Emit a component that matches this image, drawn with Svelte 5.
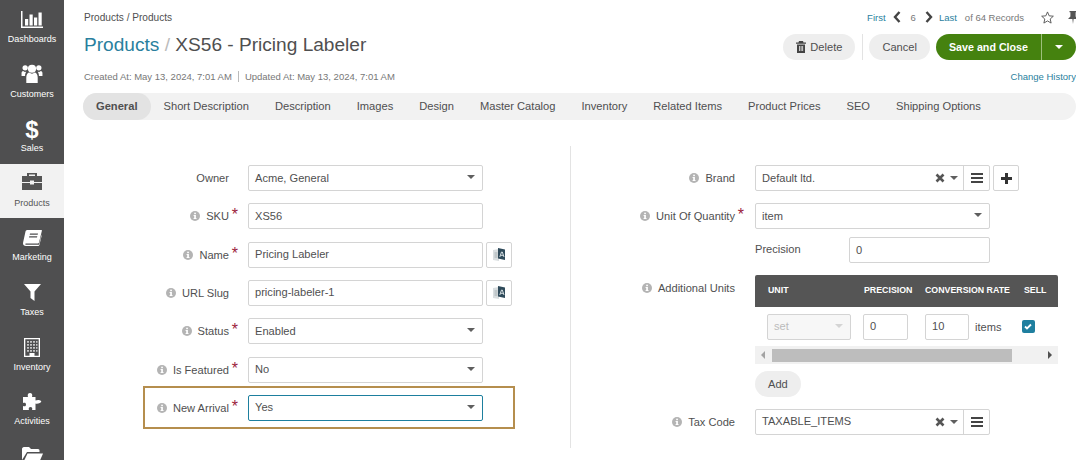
<script>
  const nav = [
    { label: 'Dashboards', icon: 'chart' },
    { label: 'Customers', icon: 'users' },
    { label: 'Sales', icon: 'dollar' },
    { label: 'Products', icon: 'case', active: true },
    { label: 'Marketing', icon: 'book' },
    { label: 'Taxes', icon: 'filter' },
    { label: 'Inventory', icon: 'building' },
    { label: 'Activities', icon: 'puzzle' },
    { label: '', icon: 'folder' }
  ];
  const tabs = ['General', 'Short Description', 'Description', 'Images', 'Design', 'Master Catalog', 'Inventory', 'Related Items', 'Product Prices', 'SEO', 'Shipping Options'];
  const fields = [
    { label: 'Owner', value: 'Acme, General', type: 'select' },
    { label: 'SKU', value: 'XS56', info: true, req: true },
    { label: 'Name', value: 'Pricing Labeler', info: true, req: true, lang: true },
    { label: 'URL Slug', value: 'pricing-labeler-1', info: true, lang: true },
    { label: 'Status', value: 'Enabled', type: 'select', info: true, req: true },
    { label: 'Is Featured', value: 'No', type: 'select', info: true, req: true },
    { label: 'New Arrival', value: 'Yes', type: 'select', info: true, req: true, hot: true }
  ];
</script>

{#snippet info()}
  <svg class="info" viewBox="0 0 10 10" width="10" height="10">
    <circle cx="5" cy="5" r="5" fill="#b4b4b4" />
    <rect x="4.200" y="1.700" width="1.700" height="1.500" fill="#fff" />
    <path d="M3.600 4h2.300v3.100h.6V8H3.600v-.9h.6V4.900h-.6z" fill="#fff" />
  </svg>
{/snippet}

{#snippet caret()}
  <span class="caret"></span>
{/snippet}

{#snippet cross()}
  <svg class="cross" viewBox="0 0 10 10" width="10" height="10">
    <path d="M1.500 1.500l7 7M8.500 1.500l-7 7" stroke="#555" stroke-width="2.600" />
  </svg>
{/snippet}

{#snippet bars()}
  <svg viewBox="0 0 12 10" width="12" height="10">
    <path d="M0 0h12v2H0zM0 4h12v2H0zM0 8h12v2H0z" fill="#444" />
  </svg>
{/snippet}

{#snippet langBtn()}
  <button class="side-btn" aria-label="Translate">
    <svg viewBox="0 0 13 15" width="13" height="15">
      <path d="M0 3l6-1v12l-6-1z" fill="#d9dee0" />
      <path d="M1.500 6h3M1.500 8h3M1.500 10h3" stroke="#9aa4a8" stroke-width=".8" />
      <path d="M5 1l7 1.500V13l-7-1.500z" fill="#2f4a5a" />
      <path d="M6.800 10l1.700-5h.8l1.700 5M7.700 8.300h2.400" fill="none" stroke="#e8eef0" stroke-width=".9" />
    </svg>
  </button>
{/snippet}

{#snippet navIcon(name)}
  {#if name === 'chart'}
    <svg viewBox="0 0 22 17" width="22" height="17">
      <path d="M0 0h1.500v15.500H22V17H0z" fill="#fff" />
      <path d="M4 8h3.200v6.500H4zM8.500 3.500h3.200v11H8.500zM13 6.500h3.200v8H13zM17.500 1.500h3.200v13h-3.200z" fill="#fff" />
    </svg>
  {:else if name === 'users'}
    <svg viewBox="0 0 22 20" width="22" height="19">
      <circle cx="11" cy="5" r="4.300" fill="#fff" />
      <circle cx="3.800" cy="4" r="2.800" fill="#fff" />
      <circle cx="18.200" cy="4" r="2.800" fill="#fff" />
      <path d="M5 20v-6c0-3 1.800-5 3.200-5 .9.800 1.800 1.200 2.800 1.200s1.900-.4 2.800-1.200c1.400 0 3.200 2 3.200 5v6z" fill="#fff" />
      <path d="M0 12.500V9.500C0 8 1 7.300 1.800 7.300c.6.600 1.300 1 2 1 .4 0 .8 0 1.200-.1C4.300 9.200 3.700 10.500 3.700 12.500zM22 12.500V9.500c0-1.500-1-2.200-1.800-2.200-.6.600-1.300 1-2 1-.4 0-.8 0-1.200-.1.700 1 1.300 2.300 1.300 4.300z" fill="#fff" />
    </svg>
  {:else if name === 'dollar'}
    <span class="dollar">$</span>
  {:else if name === 'case'}
    <svg class="case" viewBox="0 0 20 17" width="20" height="17">
      <path d="M7 3V1.500h6V3h2V0H5v3zM0 3h20v6H12V7.500H8V9H0zM0 10h8v1.500h4V10h8v7H0z" fill="#555" />
    </svg>
  {:else if name === 'book'}
    <svg viewBox="0 0 19 16" width="19" height="16">
      <path d="M4.500 0H18.500c.4 0 .5.300.4.700L16 12.500c-.2.600-.6.900-1.200.9H3.500c-1 0-1.300.4-1.300.6 0 .3.400.7 1.300.7H16l2.600-10.500v1.800L16.400 15c-.2.600-.6 1-1.200 1H3c-1.800 0-3-1-3-2.500 0-.5.100-1 .2-1.400L2.500 1.500C2.800.5 3.500 0 4.500 0z" fill="#fff" />
      <path d="M7 3.500h8l-.3 1.300h-8zM6.300 6.300h8L14 7.600H6z" fill="#4f4f50" />
    </svg>
  {:else if name === 'filter'}
    <svg viewBox="0 0 17 17" width="17" height="17">
      <path d="M0 0h17L10.500 7.500V17L6.500 14V7.500z" fill="#fff" />
    </svg>
  {:else if name === 'building'}
    <svg class="building" viewBox="0 0 16 19" width="16" height="19">
      <path fill-rule="evenodd" d="M0 0h16v19H0zM1.300 1.300v16.400h4.200V15h5v2.700h4.200V1.300z" fill="#fff" />
      <path d="M3 3h2v1.800H3zM6 3h2v1.800H6zM9 3h2v1.800H9zM12 3h1.500v1.800H12zM3 6h2v1.800H3zM6 6h2v1.800H6zM9 6h2v1.800H9zM12 6h1.500v1.800H12zM3 9h2v1.800H3zM6 9h2v1.800H6zM9 9h2v1.800H9zM12 9h1.500v1.800H12zM3 12h2v1.800H3zM6 12h2v1.800H6zM9 12h2v1.800H9zM12 12h1.500v1.800H12z" fill="#c4c4c4" />
    </svg>
  {:else if name === 'puzzle'}
    <svg viewBox="0 0 19 17" width="19" height="17">
      <path d="M0 4h5C4.500 2.500 4.500 0 7 0s2.500 2.500 2 4h3.500v3.500c1.500-.7 4-1 5.500.5s-3.500 3.500-5.500 2.500V17H9c.5-1.500.3-3-1.500-3s-2 1.500-1.500 3H0v-4c1.500.5 3 .5 3-1.500S1.500 9.500 0 10z" fill="#fff" />
    </svg>
  {:else if name === 'folder'}
    <svg viewBox="0 0 21 18" width="21" height="18">
      <path d="M0 2c0-1 .8-2 2-2h5l2 2h7c1 0 1.500.8 1.500 1.800V5H5L0 13z" fill="#fff" />
      <path d="M5.500 6.500H21L16 18H0z" fill="#fff" />
    </svg>
  {/if}
{/snippet}

<div class="page">
  <nav class="sidebar">
    {#each nav as item}
      <div class="nav-item" class:active={item.active}>
        <div class="nav-icon">{@render navIcon(item.icon)}</div>
        <div class="nav-label">{item.label}</div>
      </div>
    {/each}
  </nav>

  <main class="main">
    <header class="head">
      <div class="head-top">
        <div class="crumbs">Products / Products</div>
        <div class="pager">
          <a href="#first">First</a>
          <svg class="prev" viewBox="0 0 8 12" width="8" height="12"><path d="M6.500 1L2 6l4.500 5" fill="none" stroke="#444" stroke-width="2.400" /></svg>
          <span class="num">6</span>
          <svg class="next" viewBox="0 0 8 12" width="8" height="12"><path d="M1.500 1L6 6l-4.500 5" fill="none" stroke="#444" stroke-width="2.400" /></svg>
          <a class="last" href="#last">Last</a>
          <span class="of">of 64 Records</span>
          <svg class="star" viewBox="0 0 14 14" width="13" height="13"><path d="M7 1l1.800 4.200 4.500.4-3.400 3 1 4.400L7 10.700 3.100 13l1-4.400-3.400-3 4.500-.4z" fill="none" stroke="#555" stroke-width="1" /></svg>
          <svg class="pin" viewBox="0 0 10 13" width="10" height="13"><path d="M1.500 0h7v1.200H7.600V5.500L10 8H5.600L5 13l-.6-5H0l2.400-2.500V1.200h-.9z" fill="#555" /></svg>
        </div>
      </div>
      <div class="head-main">
        <h1><a href="#products">Products</a> <span class="slash">/</span> XS56 - Pricing Labeler</h1>
        <div class="actions">
          <button class="btn">
            <svg viewBox="0 0 10 12" width="10" height="12"><path fill-rule="evenodd" d="M3 0h4l.5 1.500H10v1.200H0V1.500h2.500zM1 3.500h8V12H1zM3 5v5h.8V5zm1.700 0v5h.8V5zm1.600 0v5h.8V5z" fill="#444" /></svg>
            Delete
          </button>
          <span class="sep"></span>
          <button class="btn cancel">Cancel</button>
          <div class="save">
            <button class="save-main">Save and Close</button>
            <button class="save-caret" aria-label="More"><span class="caret white"></span></button>
          </div>
        </div>
      </div>
      <div class="head-meta">
        <div class="meta"><span>Created At: May 13, 2024, 7:01 AM</span><i></i><span>Updated At: May 13, 2024, 7:01 AM</span></div>
        <a class="history" href="#history">Change History</a>
      </div>
    </header>

    <div class="tabs">
      {#each tabs as tab, i}
        <span class="tab" class:on={i === 0}>{tab}</span>
      {/each}
    </div>

    <div class="form">
      <section class="col left">
        {#each fields as f}
          <div class="row" class:hot={f.hot}>
            <div class="label">
              {#if f.info}{@render info()}{/if}
              <span>{f.label}</span>
              {#if f.req}<span class="req">*</span>{/if}
            </div>
            <div class="ctrl" class:focus={f.hot}>
              <span>{f.value}</span>
              {#if f.type === 'select'}{@render caret()}{/if}
            </div>
            {#if f.lang}{@render langBtn()}{/if}
          </div>
        {/each}
      </section>

      <section class="col right">
        <div class="row">
          <div class="label">{@render info()}<span>Brand</span></div>
          <div class="ctrl combo">
            <span class="grow">Default ltd.</span>
            {@render cross()}
            {@render caret()}
            <span class="combo-btn">{@render bars()}</span>
          </div>
          <button class="side-btn plus" aria-label="Add brand">
            <svg viewBox="0 0 11 11" width="11" height="11"><path d="M4 0h3v4h4v3H7v4H4V7H0V4h4z" fill="#333" /></svg>
          </button>
        </div>
        <div class="row tight">
          <div class="label">{@render info()}<span>Unit Of Quantity</span><span class="req">*</span></div>
          <div class="ctrl"><span>item</span>{@render caret()}</div>
        </div>
        <div class="precision">
          <span class="precision-label">Precision</span>
          <div class="ctrl small"><span>0</span></div>
        </div>
        <div class="units">
          <div class="label units-label">{@render info()}<span>Additional Units</span></div>
          <div class="units-box">
            <div class="thead">
              <span class="th-unit">UNIT</span>
              <span class="th-prec">PRECISION</span>
              <span class="th-rate">CONVERSION RATE</span>
              <span>SELL</span>
            </div>
            <div class="tbody">
              <div class="ctrl disabled"><span>set</span><span class="caret pale"></span></div>
              <div class="ctrl num-a"><span>0</span></div>
              <div class="ctrl num-b"><span>10</span></div>
              <span class="items">items</span>
              <span class="check">
                <svg viewBox="0 0 8 7" width="8" height="7"><path d="M1 3.500l2 2 4-4" fill="none" stroke="#fff" stroke-width="1.800" /></svg>
              </span>
            </div>
            <div class="scroll">
              <span class="arrow back"></span>
              <span class="thumb"></span>
              <span class="arrow fwd"></span>
            </div>
            <button class="btn add">Add</button>
          </div>
        </div>
        <div class="row">
          <div class="label">{@render info()}<span>Tax Code</span></div>
          <div class="ctrl combo">
            <span class="grow">TAXABLE_ITEMS</span>
            {@render cross()}
            {@render caret()}
            <span class="combo-btn">{@render bars()}</span>
          </div>
        </div>
      </section>
    </div>
  </main>
</div>

<style>
  :global(body) {
    margin: 0;
    background: #fff;
    overflow: hidden;
  }
  .page {
    display: flex;
    height: 460px;
    overflow: hidden;
    font-family: "Liberation Sans", Arial, sans-serif;
    font-size: 11.1px;
    color: #4f4f50;
  }
  a {
    color: #2a7f9e;
    text-decoration: none;
  }
  button {
    font: inherit;
    color: inherit;
    cursor: pointer;
  }

  .sidebar {
    flex: 0 0 64px;
    background: #4f4f50;
    overflow: hidden;
  }
  .nav-item {
    height: 54.6px;
    color: #fff;
    text-align: center;
    font-size: 9px;
    line-height: 12px;
  }
  .nav-item.active {
    background: #f2f2f2;
    color: #555;
  }
  .nav-icon {
    height: 28px;
    display: flex;
    align-items: flex-end;
    justify-content: center;
  }
  .nav-label {
    margin-top: 5px;
  }
  .dollar {
    font-size: 24px;
    line-height: 24px;
    font-weight: 700;
    margin-bottom: -5px;
  }
  .case {
    margin-bottom: 2px;
  }
  .building {
    margin-bottom: -1px;
  }

  .main {
    flex: 1;
    min-width: 0;
    padding: 0 0 0 19px;
    overflow: hidden;
  }
  .head-top {
    display: flex;
    justify-content: space-between;
    align-items: center;
    height: 34px;
    font-size: 10.100px;
  }
  .crumbs {
    padding-left: 1px;
  }
  .pager {
    display: flex;
    align-items: center;
    color: #777;
    font-size: 9.500px;
    margin-right: -2px;
  }
  .prev {
    margin-left: 7px;
  }
  .num {
    margin: 0 9px 0 10px;
  }
  .last {
    margin-left: 6px;
  }
  .of {
    margin-left: 8px;
  }
  .star {
    margin-left: 17px;
  }
  .pin {
    margin-left: 14px;
  }
  .head-main {
    display: flex;
    justify-content: space-between;
    align-items: center;
    height: 26px;
  }
  h1 {
    margin: -4px 0 0;
    padding-left: 1px;
    font-size: 19.100px;
    font-weight: 400;
    color: #4f4f50;
  }
  .slash {
    color: #bbb;
  }
  .actions {
    display: flex;
    align-items: center;
    gap: 7px;
  }
  .btn {
    display: inline-flex;
    align-items: center;
    gap: 4px;
    height: 26px;
    padding: 0 13px;
    border: 0;
    border-radius: 13px;
    background: #eee;
    font-size: 11.100px;
  }
  .cancel {
    margin-left: -1px;
  }
  .sep {
    width: 1px;
    height: 26px;
    background: #e3e3e3;
  }
  .save {
    display: flex;
    height: 26px;
    margin-left: -1px;
    border-radius: 13px;
    overflow: hidden;
    background: #45820f;
  }
  .save-main {
    border: 0;
    background: none;
    color: #fff;
    font-weight: 700;
    padding: 0 13px;
    font-size: 10.700px;
    border-right: 1px solid #9dbf7c;
  }
  .save-caret {
    width: 34px;
    border: 0;
    background: none;
    display: flex;
    align-items: center;
    justify-content: center;
  }
  .head-meta {
    display: flex;
    justify-content: space-between;
    align-items: center;
    height: 33px;
    font-size: 9.500px;
    color: #777;
  }
  .meta {
    display: flex;
    align-items: center;
    padding-left: 1px;
  }
  .meta i {
    width: 1px;
    height: 11px;
    background: #bbb;
    margin: 0 6px;
  }
  .tabs {
    display: flex;
    align-items: center;
    height: 27px;
    background: #f2f2f2;
    border-radius: 13.500px;
    font-size: 11.150px;
  }
  .tab {
    height: 27px;
    line-height: 27px;
    padding: 0 13px;
    border-radius: 13.500px;
  }
  .tab.on {
    background: #e3e3e3;
    font-weight: 700;
  }

  .form {
    display: flex;
    padding-top: 26px;
  }
  .left {
    box-sizing: border-box;
    width: 488px;
    height: 302px;
    padding-top: 19px;
    border-right: 1px solid #e3e3e3;
  }
  .right {
    flex: 1;
    padding-top: 19px;
  }
  .row {
    display: flex;
    align-items: center;
    height: 26px;
    margin-bottom: 12.330px;
    position: relative;
  }
  .label {
    display: flex;
    align-items: center;
    justify-content: flex-end;
    flex: 0 0 146px;
    margin-right: 19px;
    position: relative;
  }
  .right .label {
    flex: 0 0 164px;
    margin-right: 20px;
  }
  .info {
    margin-right: 6px;
  }
  .req {
    position: absolute;
    right: -9px;
    top: -3px;
    color: #9c1d3c;
    font-size: 16px;
    line-height: 16px;
  }
  .ctrl {
    display: flex;
    align-items: center;
    box-sizing: border-box;
    width: 235px;
    height: 26px;
    padding: 0 6px 1px;
    border: 1px solid #d4d4d4;
    border-radius: 2px;
    position: relative;
    background: #fff;
  }
  .ctrl > .caret:last-child {
    position: absolute;
    right: 7px;
    top: 9px;
  }
  .ctrl.focus {
    border-color: #1d7f9e;
  }
  .caret {
    display: inline-block;
    width: 0;
    height: 0;
    border-left: 4px solid transparent;
    border-right: 4px solid transparent;
    border-top: 4px solid #5f5f5f;
  }
  .caret.white {
    border-top-color: #fff;
  }
  .caret.pale {
    border-top-color: #d4d4d4;
  }
  .side-btn {
    display: flex;
    align-items: center;
    justify-content: center;
    width: 26px;
    height: 26px;
    margin-left: 3px;
    padding: 0;
    border: 1px solid #d4d4d4;
    border-radius: 2px;
    background: #fff;
  }
  .row.hot::before {
    content: '';
    position: absolute;
    left: 60px;
    top: -9px;
    width: 372px;
    height: 43px;
    box-sizing: border-box;
    border: 2px solid #b58e4e;
  }
  .combo {
    padding-right: 0;
    padding-bottom: 0;
  }
  .grow {
    flex: 1;
    padding-bottom: 1px;
  }
  .cross {
    margin-right: 5px;
  }
  .combo .caret {
    margin-right: 5px;
  }
  .combo-btn {
    flex: 0 0 25px;
    align-self: stretch;
    display: flex;
    align-items: center;
    justify-content: center;
    border-left: 1px solid #d4d4d4;
  }
  .right .row.tight {
    margin-bottom: 8px;
  }
  .precision {
    display: flex;
    align-items: center;
    justify-content: space-between;
    width: 235px;
    margin-left: 184px;
    margin-bottom: 12px;
  }
  .precision-label {
    margin-top: -2px;
  }
  .ctrl.small {
    width: 141px;
  }
  .units {
    display: flex;
    align-items: flex-start;
    margin-bottom: 11.600px;
  }
  .units-label {
    padding-top: 7px;
  }
  .units-box {
    width: 303px;
  }
  .thead {
    display: flex;
    align-items: center;
    box-sizing: border-box;
    height: 32px;
    padding: 0 0 3px 13px;
    background: #555;
    color: #fff;
    font-size: 8.800px;
    font-weight: 700;
    border-radius: 2px 2px 0 0;
  }
  .th-unit { width: 96px; }
  .th-prec { width: 61px; }
  .th-rate { width: 99px; }
  .tbody {
    display: flex;
    align-items: center;
    height: 39px;
    padding-left: 12px;
    box-sizing: border-box;
  }
  .disabled {
    width: 84px;
    background: #f7f7f7;
    color: #bbb;
    margin-right: 12px;
  }
  .num-a {
    width: 45px;
    margin-right: 17px;
  }
  .num-b {
    width: 44px;
  }
  .items {
    margin-left: 6px;
  }
  .check {
    display: flex;
    align-items: center;
    justify-content: center;
    width: 13px;
    height: 13px;
    margin-left: 20px;
    border-radius: 2px;
    background: #1f7f9f;
  }
  .scroll {
    display: flex;
    align-items: center;
    height: 18px;
    background: #f1f1f1;
    position: relative;
  }
  .thumb {
    width: 240px;
    height: 13px;
    margin-left: 17px;
    background: #bdbdbd;
  }
  .arrow {
    position: absolute;
    top: 5px;
    width: 0;
    height: 0;
    border-top: 4px solid transparent;
    border-bottom: 4px solid transparent;
  }
  .arrow.back {
    left: 6px;
    border-right: 4px solid #a3a3a3;
  }
  .arrow.fwd {
    right: 6px;
    border-left: 4px solid #505050;
  }
  .add {
    margin-top: 7px;
    display: flex;
  }
</style>
